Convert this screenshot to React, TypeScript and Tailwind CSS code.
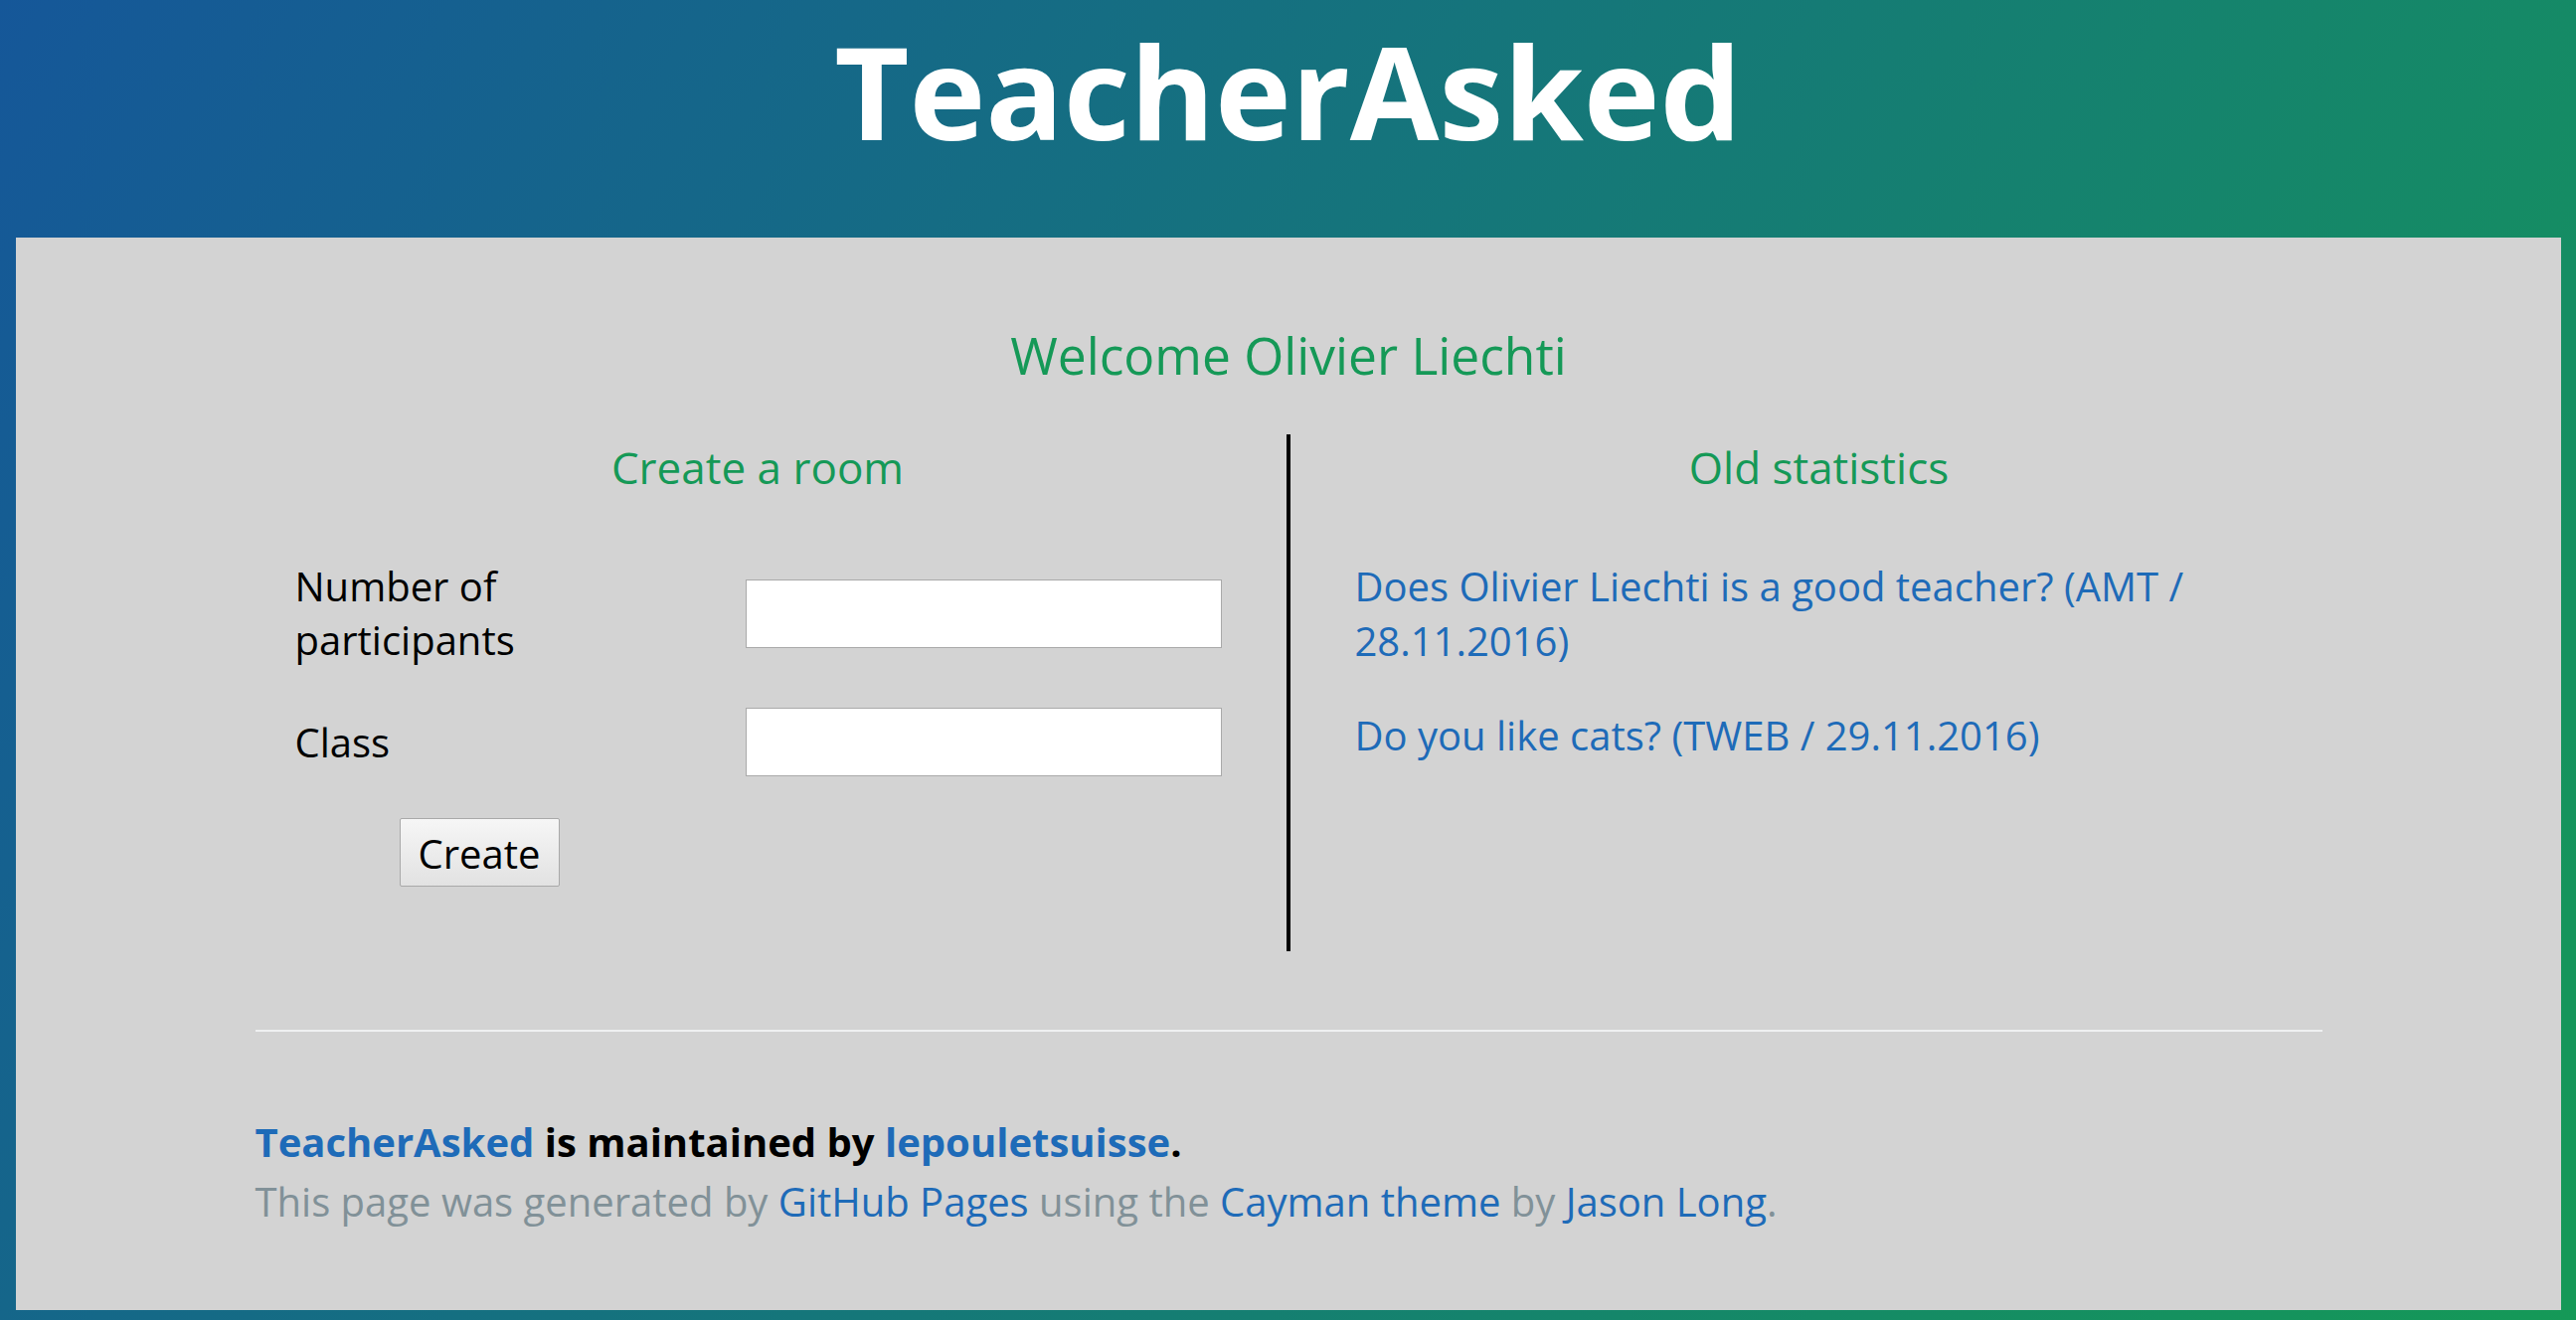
import React from "react";

export default function App() {
  return (
    <div className="min-h-screen pb-[10px] bg-[linear-gradient(120deg,#155799,#159957)] font-['Open_Sans',sans-serif]">
      <header className="h-[239px] pt-[13px]">
        <h1 className="text-center text-[130px] leading-[156px] font-bold text-white">TeacherAsked</h1>
      </header>
      <main className="ml-[16px] mr-[15px] bg-[#d3d3d3]">
        <div className="mx-auto w-[2079px] pt-[87px] pb-[79px]">
          <h2 className="text-center text-[51.5px] leading-[62px] font-normal text-[#159957]">
            Welcome Olivier Liechti
          </h2>
          <div className="mt-[49px] flex h-[520px]">
            <section className="w-[1041px] shrink-0 border-r-4 border-black pr-[26px]">
              <h3 className="mt-[7px] text-center text-[44px] leading-[52px] font-normal text-[#159957]">
                Create a room
              </h3>
              <form className="mt-[67px] flex flex-col gap-[41px] pl-[40px]" onSubmit={(e) => e.preventDefault()}>
                <div className="flex items-center">
                  <label className="w-[453px] shrink-0 pr-[200px] text-[40px] leading-[54px] text-black">
                    Number of participants
                  </label>
                  <input type="text" className="h-[69px] w-[479px] border border-[#a9a9a9] bg-white" />
                </div>
                <div className="flex items-center">
                  <label className="w-[453px] shrink-0 text-[40px] leading-[54px] text-black">Class</label>
                  <input type="text" className="h-[69px] w-[479px] border border-[#a9a9a9] bg-white" />
                </div>
                <div className="pt-[1px]">
                  <button
                    type="submit"
                    className="ml-[105px] h-[69px] w-[161px] rounded-[2px] border border-[#a9a9a9] bg-[linear-gradient(#f6f6f6,#e2e2e2)] pt-[2px] text-[40px] leading-[54px] text-black"
                  >
                    Create
                  </button>
                </div>
              </form>
            </section>
            <section className="flex-1 pl-[26px]">
              <h3 className="mt-[7px] text-center text-[44px] leading-[52px] font-normal text-[#159957]">
                Old statistics
              </h3>
              <div className="mt-[66px] flex flex-col gap-[40px] pl-[39px] text-[40px] leading-[55px]">
                <a href="#" className="text-[#1e6bb8]">
                  Does Olivier Liechti is a good teacher? (AMT / 28.11.2016)
                </a>
                <a href="#" className="text-[#1e6bb8]">
                  Do you like cats? (TWEB / 29.11.2016)
                </a>
              </div>
            </section>
          </div>
          <div className="mt-[79px] h-[2px] bg-[#eff0f1]" />
          <footer className="pt-[81px] text-[40px] leading-[60px]">
            <span className="block font-bold text-black">
              <a href="#" className="text-[#1e6bb8]">TeacherAsked</a> is maintained by{" "}
              <a href="#" className="text-[#1e6bb8]">lepouletsuisse</a>.
            </span>
            <span className="block text-[#819198]">
              This page was generated by <a href="#" className="text-[#1e6bb8]">GitHub Pages</a> using the{" "}
              <a href="#" className="text-[#1e6bb8]">Cayman theme</a> by{" "}
              <a href="#" className="text-[#1e6bb8]">Jason Long</a>.
            </span>
          </footer>
        </div>
      </main>
    </div>
  );
}
